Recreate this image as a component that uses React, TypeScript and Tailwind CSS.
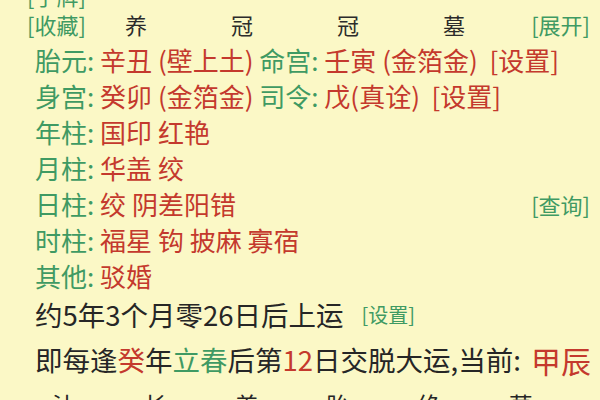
import React from 'react';

const G = 'text-[#3f9a63]';
const R = 'text-[#c4392d]';

const Label: React.FC<{ children: React.ReactNode }> = ({ children }) => (
  <span className={G}>{children}</span>
);
const Val: React.FC<{ children: React.ReactNode }> = ({ children }) => (
  <span className={R}>{children}</span>
);

const stages1 = ['养', '冠', '冠', '墓'];
const stages2 = ['沐', '长', '养', '胎', '绝', '墓'];

export default function App() {
  return (
    <div
      className="w-[600px] h-[400px] overflow-hidden bg-[#fbf8c6]"
      style={{ fontFamily: '"Noto Sans CJK SC", "Noto Sans", sans-serif' }}
    >
      <div className="-mt-[16px] flex flex-col text-[26px] leading-none whitespace-pre">
        {/* top row, cut off by the screen edge */}
        <div className="h-[22px] flex items-center pl-[27px] text-[22px] text-[#3f9a63]">[手牌]</div>

        <div className="h-[36px] flex items-center pl-[27px] pr-[10px] text-[22px]">
          <span className={`${G} w-[98px] shrink-0`}>[收藏]</span>
          <div className="flex gap-[84px] shrink-0 text-[#2b2b2b]">
            {stages1.map((s, i) => (
              <span key={i}>{s}</span>
            ))}
          </div>
          <span className={`${G} ml-auto shrink-0`}>[展开]</span>
        </div>

        <div className="h-[36px] flex items-center pl-[35px]">
          <Label>胎元: </Label><Val>辛丑 (壁上土) </Val>
          <Label>命宫: </Label><Val>壬寅 (金箔金)  [设置]</Val>
        </div>
        <div className="h-[36px] flex items-center pl-[35px]">
          <Label>身宫: </Label><Val>癸卯 (金箔金) </Val>
          <Label>司令: </Label><Val>戊(真诠)  [设置]</Val>
        </div>
        <div className="h-[36px] flex items-center pl-[35px]">
          <Label>年柱: </Label><Val>国印 红艳</Val>
        </div>
        <div className="h-[36px] flex items-center pl-[35px]">
          <Label>月柱: </Label><Val>华盖 绞</Val>
        </div>
        <div className="h-[36px] flex items-center pl-[35px] pr-[10px]">
          <Label>日柱: </Label><Val>绞 阴差阳错</Val>
          <span className={`${G} ml-auto text-[22px]`}>[查询]</span>
        </div>
        <div className="h-[36px] flex items-center pl-[35px]">
          <Label>时柱: </Label><Val>福星 钩 披麻 寡宿</Val>
        </div>
        <div className="h-[36px] flex items-center pl-[35px]">
          <Label>其他: </Label><Val>驳婚</Val>
        </div>

        <div className="h-[42px] flex items-center pl-[35px] text-[27.5px] text-[#262626]">
          约5年3个月零26日后上运
          <span className={`${G} ml-[18px] text-[20px]`}>[设置]</span>
        </div>
        <div className="h-[48px] flex items-center pl-[35px] text-[27.5px] text-[#262626]">
          即每逢<Val>癸</Val>年<Label>立春</Label>后第<Val>12</Val>日交脱大运,当前: <span className={`${R} ml-[4px] text-[30px]`}>甲辰</span>
        </div>
        <div className="h-[42px] flex items-center pl-[52px] text-[24px] text-[#262626]">
          {stages2.map((s, i) => (
            <span key={i} className="w-[92px]">{s}</span>
          ))}
        </div>
      </div>
    </div>
  );
}
